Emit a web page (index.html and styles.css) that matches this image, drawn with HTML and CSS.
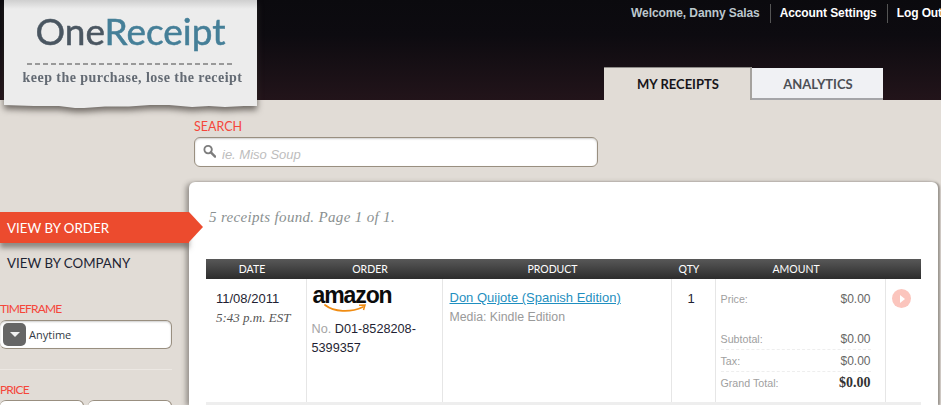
FILE: index.html
```html
<!DOCTYPE html>
<html>
	<head>
		<meta charset="UTF-8" />
		<title>OneReceipt - My Receipts</title>
		<link rel="stylesheet" href="styles.css">
	</head>

	<body>
		<header class="header">
			<nav class="user-nav">
				<span class="user-nav-item welcome">Welcome, Danny Salas</span>
				<a class="user-nav-item" href="#">Account Settings</a>
				<a class="user-nav-item" href="#">Log Out</a>
			</nav>
			<div class="tabs">
				<a class="tab active" href="#">MY RECEIPTS</a>
				<a class="tab" href="#">ANALYTICS</a>
			</div>
		</header>

		<div class="logo">
			<div class="logo-paper">
				<div class="logo-name">One<span class="logo-accent">Receipt</span></div>
				<div class="logo-dashes"></div>
				<div class="logo-tagline">keep the purchase, lose the receipt</div>
			</div>
		</div>

		<div class="page">
			<aside class="sidebar">
				<a class="view-link active" href="#">VIEW BY ORDER</a>
				<a class="view-link" href="#">VIEW BY COMPANY</a>

				<div class="filter">
					<div class="field-label">TIMEFRAME</div>
					<div class="select">
						<span class="select-button"></span>
						<span>Anytime</span>
					</div>
				</div>

				<div class="filter price-filter">
					<div class="field-label">PRICE</div>
					<div class="price-inputs">
						<div class="price-input"></div>
						<div class="price-input"></div>
					</div>
				</div>
			</aside>

			<main class="content">
				<div class="search">
					<label class="field-label" for="search">SEARCH</label>
					<div class="search-box">
						<svg class="search-icon" viewBox="0 0 14 14">
							<circle cx="5.5" cy="5.5" r="4" fill="none" stroke="#7d7d7d" stroke-width="2" />
							<path d="M8.5 8.5L13 13" stroke="#7d7d7d" stroke-width="2.6" stroke-linecap="round" />
						</svg>
						<input id="search" type="text" placeholder="ie. Miso Soup" />
					</div>
				</div>

				<section class="card">
					<p class="results">5 receipts found. Page 1 of 1.</p>

					<table class="receipts">
						<thead>
							<tr>
								<th class="col-date">DATE</th>
								<th class="col-order">ORDER</th>
								<th class="col-product">PRODUCT</th>
								<th class="col-qty">QTY</th>
								<th class="col-amount">AMOUNT</th>
								<th class="col-action"></th>
							</tr>
						</thead>
						<tbody>
							<tr>
								<td>
									<div class="date">11/08/2011</div>
									<div class="time">5:43 p.m. EST</div>
								</td>
								<td>
									<div class="amazon">
										<span class="amazon-name">amazon</span>
										<svg class="amazon-smile" viewBox="0 0 42 10">
											<path d="M1 1C10 8 26 9 39 3" fill="none" stroke="#f08c12" stroke-width="1.8" stroke-linecap="round" />
											<path d="M35 1.2L41 1 39.5 6" fill="none" stroke="#f08c12" stroke-width="1.5" />
										</svg>
									</div>
									<div class="order-no"><span class="muted">No.</span> D01-8528208-5399357</div>
								</td>
								<td class="product">
									<a class="product-link" href="#">Don Quijote (Spanish Edition)</a>
									<div class="media">Media: Kindle Edition</div>
								</td>
								<td class="qty">1</td>
								<td>
									<div class="amount-row price-row"><span>Price:</span><b>$0.00</b></div>
									<div class="amount-row"><span>Subtotal:</span><b>$0.00</b></div>
									<div class="amount-row"><span>Tax:</span><b>$0.00</b></div>
									<div class="amount-row total"><span>Grand Total:</span><b>$0.00</b></div>
								</td>
								<td>
									<a class="row-open" href="#"></a>
								</td>
							</tr>
						</tbody>
					</table>
				</section>
			</main>
		</div>
	</body>
</html>
```

FILE: styles.css
```css
* {
	box-sizing: border-box;
}

html,
body {
	margin: 0;
	height: 405px;
	overflow: hidden;
	background-color: #e1dcd6;
	font-family: "Liberation Sans", Arial, sans-serif;
}

a {
	text-decoration: none;
}

.header {
	display: flex;
	flex-direction: column;
	align-items: flex-end;
	justify-content: space-between;
	height: 100px;
	background: linear-gradient(#0b0a0e, #0d0b10 35%, #22141a);
}

.user-nav {
	display: flex;
	margin: 4px -1px 0 0;
	font-size: 12px;
	font-weight: bold;
	letter-spacing: -0.1px;
}

.user-nav-item {
	height: 19px;
	padding: 0 10px 0 9px;
	line-height: 19px;
	color: #fff;
	border-left: 1px solid #555;
}

.welcome {
	color: #bcc7cd;
	border-left: 0;
}

.user-nav-item:last-child {
	padding-right: 0;
}

.tabs {
	display: flex;
	align-items: flex-end;
	margin-right: 58px;
}

.tab {
	width: 131px;
	height: 32px;
	padding-left: 1px;
	font-family: Lato, sans-serif;
	font-size: 13px;
	font-weight: bold;
	line-height: 33px;
	text-align: center;
	color: #4c4f55;
	background-color: #f0f1f4;
	border-bottom: 2px solid #a5a5a8;
}

.tab.active {
	width: 148px;
	height: 33px;
	padding-left: 2px;
	color: #17151a;
	background-color: #e1dcd6;
	border-top: 1px solid #8f8c89;
	border-right: 2px solid #a5a29e;
	border-bottom: 0;
}

.logo {
	position: absolute;
	top: 0;
	left: 4px;
	filter: drop-shadow(0 4px 3px rgba(50, 45, 40, 0.65));
}

.logo-paper {
	display: flex;
	flex-direction: column;
	align-items: center;
	width: 253px;
	height: 108px;
	padding-top: 8px;
	background: linear-gradient(#cfcfcf, #ececec 9px, #ececec);
	clip-path: polygon(0 0, 253px 0, 253px 106px, 240px 106px, 221px 107px, 205px 106px, 188px 107px, 165px 105px, 146px 105px, 125px 106.5px, 101px 106.5px, 80px 108px, 71px 108px, 55px 106px, 30px 106px, 0 105px);
}

.logo-name {
	font-family: Lato, sans-serif;
	font-size: 37px;
	line-height: 46px;
	color: #4a5661;
	-webkit-text-stroke: 0.5px currentColor;
}

.logo-accent {
	color: #457f98;
}

.logo-dashes {
	width: 208px;
	height: 2px;
	margin-top: 9px;
	background: repeating-linear-gradient(90deg, #999 0 5px, transparent 5px 8px);
}

.logo-tagline {
	margin: 5px 0 0 4px;
	font-family: "Liberation Serif", serif;
	font-size: 14px;
	font-weight: bold;
	line-height: 16px;
	letter-spacing: 0.45px;
	white-space: nowrap;
	color: #636a73;
}

.page {
	display: flex;
	height: 305px;
	overflow: hidden;
}

.sidebar {
	position: relative;
	z-index: 2;
	flex: none;
	width: 189px;
	padding-top: 112px;
}

.view-link {
	display: block;
	font-family: Lato, sans-serif;
	font-size: 13.3px;
	color: #1d2433;
}

.view-link.active {
	position: relative;
	height: 31px;
	padding-left: 7px;
	line-height: 32px;
	color: #fff;
	background-color: #ec4b2e;
	box-shadow: 0 5px 5px rgba(60, 55, 50, 0.5);
}

.view-link.active::after {
	content: "";
	position: absolute;
	top: 0;
	left: 189px;
	border-style: solid;
	border-width: 15.5px 0 15.5px 14px;
	border-color: transparent transparent transparent #ec4b2e;
}

.view-link + .view-link {
	margin-top: 11px;
	padding-left: 7px;
	line-height: 18px;
}

.field-label {
	display: block;
	font-family: Lato, sans-serif;
	font-size: 12px;
	line-height: 14px;
	color: #f5463a;
}

.search .field-label {
	font-size: 12.5px;
}

.filter {
	width: 172px;
	margin-top: 30px;
}

.filter .field-label {
	letter-spacing: -0.85px;
}

.select {
	display: flex;
	align-items: center;
	gap: 3px;
	height: 29px;
	margin-top: 4px;
	padding-left: 3px;
	font-family: "Open Sans", sans-serif;
	font-size: 11px;
	color: #333a44;
	background-color: #fff;
	border: 1px solid #998f80;
	border-left: 0;
	border-radius: 6px;
	box-shadow: inset 0 1px 2px rgba(0, 0, 0, 0.2);
}

.select-button {
	display: flex;
	align-items: center;
	justify-content: center;
	width: 23px;
	height: 23px;
	background-color: #666;
	border-radius: 5px;
}

.select-button::after {
	content: "";
	border-style: solid;
	border-width: 5px 5px 0;
	border-color: #f2f2f2 transparent transparent;
}

.price-filter {
	margin-top: 20px;
	padding-top: 13px;
	border-top: 1px solid #ece8e3;
}

.price-inputs {
	display: flex;
	gap: 4px;
	margin-top: 3px;
}

.price-input {
	flex: 1;
	height: 30px;
	background-color: #fff;
	border: 1px solid #998f80;
	border-left: 0;
	border-radius: 6px;
}

.content {
	flex: 1;
	min-width: 0;
}

.search {
	width: 404px;
	margin: 20px 0 15px 5px;
}

.search-box {
	display: flex;
	align-items: center;
	gap: 6px;
	height: 30px;
	margin-top: 3px;
	padding-left: 8px;
	background-color: #fff;
	border: 1px solid #998f80;
	border-radius: 6px;
	box-shadow: inset 0 1px 2px rgba(0, 0, 0, 0.2);
}

.search-icon {
	flex: none;
	width: 13px;
	height: 14px;
	margin-top: -2px;
}

.search-box input {
	flex: 1;
	min-width: 0;
	padding: 4px 0 0;
	font-family: "Liberation Sans", Arial, sans-serif;
	font-size: 13px;
	font-style: italic;
	background: none;
	border: 0;
}

.search-box input::placeholder {
	color: #bdbdbd;
	opacity: 1;
}

.card {
	width: 749px;
	height: 223px;
	padding: 27px 17px 0 17px;
	background-color: #fff;
	border-radius: 6px 6px 0 0;
	box-shadow: -3px 1px 5px rgba(60, 55, 50, 0.45), 2px 0 2px rgba(60, 55, 50, 0.4);
}

.results {
	height: 50px;
	margin: 0 0 0 3px;
	font-family: "Liberation Serif", serif;
	font-size: 15px;
	font-style: italic;
	line-height: 16px;
	letter-spacing: 0.33px;
	color: #8a9090;
}

.receipts {
	width: 715px;
	table-layout: fixed;
	border-collapse: collapse;
	border-bottom: 3px solid #eeeeee;
}

.receipts th {
	height: 20px;
	padding: 0 8px 0 0;
	font-family: Lato, sans-serif;
	font-size: 10.5px;
	font-weight: normal;
	color: #fff;
	background: linear-gradient(#585858, #2c2c2c);
}

.col-date {
	width: 100px;
}

.col-order {
	width: 136px;
}

.col-product {
	width: 229px;
}

.col-qty {
	width: 44px;
}

.col-amount {
	width: 170px;
}

.receipts td {
	height: 124px;
	padding: 11px 5px 0;
	vertical-align: top;
	font-size: 13px;
	color: #1f1f33;
	border-left: 1px solid #e6e6e6;
}

.receipts td:first-child {
	padding-left: 10px;
	border-left: 0;
}

.date {
	margin-top: 1px;
	line-height: 16px;
}

.time {
	margin-top: 3px;
	font-family: "Liberation Serif", serif;
	font-size: 13px;
	font-style: italic;
	color: #555;
}

.amazon {
	height: 31px;
	margin: -7px 0 0 1px;
}

.amazon-name {
	display: block;
	font-family: "Liberation Sans", Arial, sans-serif;
	font-size: 23px;
	font-weight: bold;
	line-height: 24px;
	letter-spacing: -1.1px;
	color: #0c0c0c;
}

.amazon-smile {
	display: block;
	width: 42px;
	height: 10px;
	margin: -3px 0 0 11px;
}

.order-no {
	margin-top: 6px;
	font-size: 12.7px;
	line-height: 19px;
}

.muted {
	color: #a5a5a5;
}

.receipts .product {
	padding-left: 7px;
}

.product-link {
	line-height: 16px;
	color: #1f8fc0;
	text-decoration: underline;
}

.media {
	margin-top: 4px;
	font-size: 12.3px;
	line-height: 15px;
	color: #9a9a9a;
}

.receipts .qty {
	padding: 12px 9px 0 5px;
	text-align: center;
}

.amount-row {
	display: flex;
	align-items: center;
	justify-content: space-between;
	width: 150px;
	height: 22px;
	font-size: 10.7px;
	color: #a0a0a0;
	border-bottom: 1px dashed #eeeeee;
}

.amount-row b {
	font-size: 12px;
	font-weight: normal;
	color: #666;
}

.price-row {
	height: 19px;
	margin-top: -1px;
	margin-bottom: 20px;
	border-bottom: 0;
}

.amount-row.total {
	border-bottom: 0;
}

.amount-row.total b {
	font-family: "Liberation Serif", serif;
	font-size: 14px;
	font-weight: bold;
	color: #333;
}

.row-open {
	display: flex;
	align-items: center;
	justify-content: center;
	width: 19px;
	height: 19px;
	margin: -1px 0 0 1px;
	background-color: #fbc5bd;
	border-radius: 50%;
}

.row-open::after {
	content: "";
	margin-left: 2px;
	border-style: solid;
	border-width: 4px 0 4px 5px;
	border-color: transparent transparent transparent #fff;
}
```
